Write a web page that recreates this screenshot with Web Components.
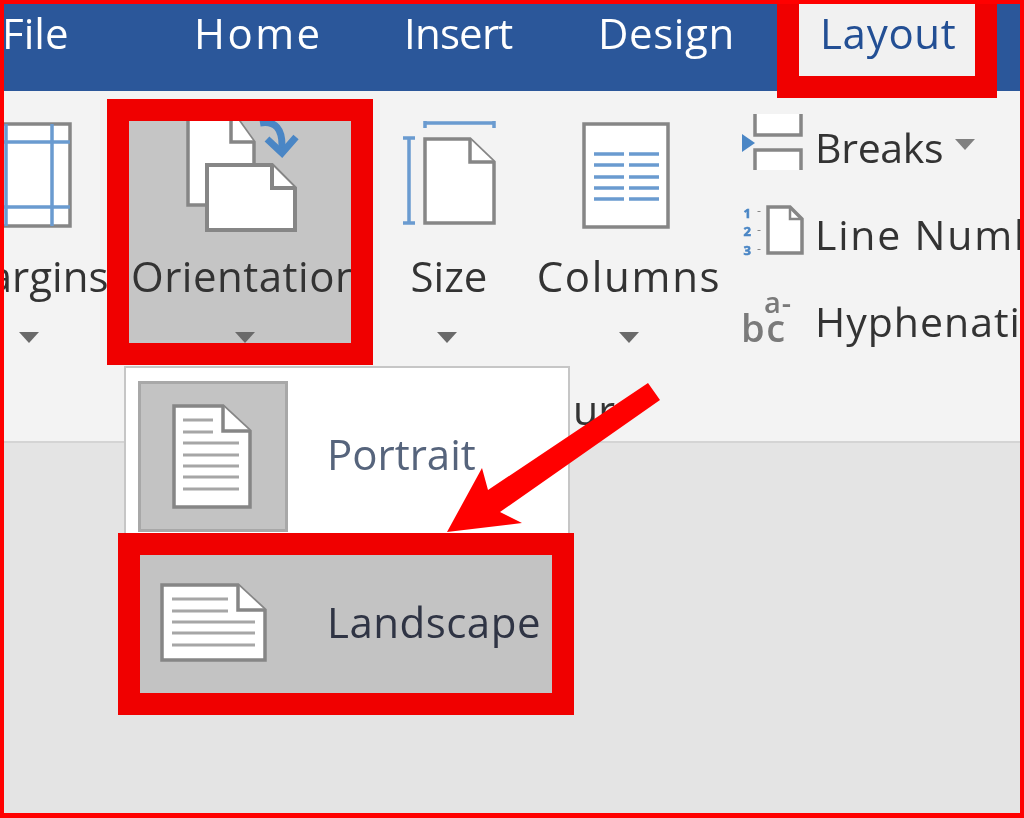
<!DOCTYPE html>
<html>
<head>
<meta charset="utf-8">
<style>
    html, body { margin: 0; padding: 0; }
    body { width: 1024px; height: 818px; overflow: hidden; font-family: "Open Sans", "Noto Sans", sans-serif; }
</style>
</head>
<body>
<word-frame>
    <tab-bar>
        <ribbon-tab style="--w:190px;margin-left:-2px;margin-right:2px">File</ribbon-tab>
        <ribbon-tab style="--w:210px;--ls:2.5px">Home</ribbon-tab>
        <ribbon-tab style="--w:194px;--ls:-.8px">Insert</ribbon-tab>
        <ribbon-tab style="--w:179px;--ls:.6px">Design</ribbon-tab>
        <ribbon-tab selected style="--w:220px;--ls:.7px">Layout</ribbon-tab>
    </tab-bar>
    <ribbon-panel>
        <ribbon-tool label="Margins" style="--w:156px;margin-left:-53px">
            <svg slot="icon" width="156" height="125" viewBox="-49 121 156 125">
                <rect x="-30" y="124" width="100" height="102" fill="#fff" stroke="#868686" stroke-width="3.5"/>
                <path d="M-30 142H70M-30 207H70M6 124V226M52 124V226" stroke="#6a9bd0" stroke-width="3.5" fill="none"/>
            </svg>
        </ribbon-tool>
        <ribbon-tool selected label="Orientation" style="--w:266px;--pad:2px;--ls:.5px;--cs:5px">
            <svg slot="icon" width="222" height="125" viewBox="129 121 222 125">
                <path d="M188 110H231L254 142V205H188Z" fill="#fff" stroke="#868686" stroke-width="3.5"/>
                <path d="M231 110V142H254" fill="#fff" stroke="#868686" stroke-width="3.5"/>
                <path d="M207 165H272L295 188V230H207Z" fill="#fff" stroke="#868686" stroke-width="4"/>
                <path d="M272 165V188H295" fill="#fff" stroke="#868686" stroke-width="4"/>
                <path d="M260 123Q283 119 282 148" fill="none" stroke="#4a86c5" stroke-width="7"/>
                <path d="M267 139L282 153L296 137" fill="none" stroke="#4a86c5" stroke-width="7"/>
            </svg>
        </ribbon-tool>
        <ribbon-tool label="Size" style="--w:148px;--pad:4px">
            <svg slot="icon" width="148" height="125" viewBox="373 121 148 125" style="overflow:visible">
                <path d="M425 123H494M425 119V128M494 119V128" fill="none" stroke="#6a9bd0" stroke-width="3.5"/>
                <path d="M409 138V223M403 138H415M403 223H415" fill="none" stroke="#6a9bd0" stroke-width="3.5"/>
                <path d="M425 139H470L494 162V223H425Z" fill="#fff" stroke="#868686" stroke-width="3.5"/>
                <path d="M470 139V162H494" fill="#fff" stroke="#868686" stroke-width="3.5"/>
            </svg>
        </ribbon-tool>
        <ribbon-tool label="Columns" style="--w:216px;--ls:1.7px">
            <svg slot="icon" width="216" height="125" viewBox="521 121 216 125">
                <rect x="584" y="124" width="84" height="103" fill="#fff" stroke="#868686" stroke-width="3.5"/>
                <path d="M594 154H624M629 154H659M594 165H624M629 165H659M594 177H624M629 177H659M594 188H624M629 188H659M594 199H624M629 199H659" stroke="#6a9bd0" stroke-width="3.5" fill="none"/>
            </svg>
        </ribbon-tool>
        <command-stack>
            <side-command label="Breaks" caret style="--ls:-.3px">
                <svg slot="icon" width="70" height="87" viewBox="742 104 70 87">
                    <path d="M755 114H801V135H755Z" fill="#fff"/>
                    <path d="M755 150H801V170H755Z" fill="#fff"/>
                    <path d="M755 114V135H801V114M755 170V150H801V170" fill="none" stroke="#868686" stroke-width="3.5"/>
                    <path d="M742 134L755 143L742 152Z" fill="#4a86c5"/>
                </svg>
            </side-command>
            <side-command label="Line Numbers" style="--ls:1.8px">
                <svg slot="icon" width="70" height="87" viewBox="742 191 70 87">
                    <path d="M768 207H790L802 219V253H768Z" fill="#fff" stroke="#868686" stroke-width="3.5"/>
                    <path d="M790 207V219H802" fill="none" stroke="#868686" stroke-width="2.5"/>
                    <path d="M759 211V212M759 230V231M759 249V250" stroke="#868686" stroke-width="3" fill="none"/>
                    <text x="748" y="218" font-size="13" font-weight="700" text-anchor="middle" fill="#4a86c5" stroke="#4a86c5" stroke-width=".6" font-family="Open Sans">1</text>
                    <text x="748" y="236" font-size="13" font-weight="700" text-anchor="middle" fill="#4a86c5" stroke="#4a86c5" stroke-width=".6" font-family="Open Sans">2</text>
                    <text x="748" y="255" font-size="13" font-weight="700" text-anchor="middle" fill="#4a86c5" stroke="#4a86c5" stroke-width=".6" font-family="Open Sans">3</text>
                </svg>
            </side-command>
            <side-command label="Hyphenation" style="--ls:1px">
                <svg slot="icon" width="70" height="87" viewBox="742 278 70 87">
                    <text x="764" y="313" font-size="29" font-weight="600" fill="#7a7a7a" font-family="Open Sans">a-</text>
                    <text x="741" y="342" font-size="38" font-weight="600" fill="#7a7a7a" font-family="Open Sans" letter-spacing="1.5">bc</text>
                </svg>
            </side-command>
        </command-stack>
    </ribbon-panel>
    <group-caption>ur</group-caption>
    <doc-area></doc-area>
    <orient-menu>
        <menu-item label="Portrait" tile>
            <svg slot="icon" width="144" height="145" viewBox="141 384 144 145">
                <path d="M174 406H223L250 431V507H174Z" fill="#fff" stroke="#868686" stroke-width="3.5"/>
                <path d="M223 406V431H250" fill="#fff" stroke="#868686" stroke-width="3.5"/>
                <path d="M183 420H213M183 432H213M183 443H239M183 455H239M183 466H239M183 477H239M183 489H239" stroke="#a6a6a6" stroke-width="3" fill="none"/>
            </svg>
        </menu-item>
        <menu-item label="Landscape" selected>
            <svg slot="icon" width="150" height="138" viewBox="140 555 150 138">
                <path d="M162 585H238L265 610V660H162Z" fill="#fff" stroke="#868686" stroke-width="3.5"/>
                <path d="M238 585V610H265" fill="#fff" stroke="#868686" stroke-width="3.5"/>
                <path d="M172 599H228M172 611H228M172 622H255M172 633H255M172 645H255" stroke="#a6a6a6" stroke-width="3" fill="none"/>
            </svg>
        </menu-item>
    </orient-menu>
    <callout-arrow></callout-arrow>
</word-frame>

<script>
    // Outer picture frame with the red screenshot edge
    class WordFrame extends HTMLElement {
        constructor() {
            super();
            this.attachShadow({ mode: "open" });
            this.shadowRoot.innerHTML = `
                <style>
                    :host {
                        display: flex;
                        flex-direction: column;
                        position: relative;
                        box-sizing: border-box;
                        width: 1024px;
                        height: 818px;
                        border: solid #f00;
                        border-width: 4px 4px 5px 4px;
                        background: #e4e4e4;
                        overflow: hidden;
                    }
                </style>
                <slot></slot>`;
        }
    }

    class TabBar extends HTMLElement {
        constructor() {
            super();
            this.attachShadow({ mode: "open" });
            this.shadowRoot.innerHTML = `
                <style>
                    :host {
                        display: flex;
                        align-items: flex-start;
                        flex: none;
                        height: 87px;
                        background: #2b579a;
                        position: relative;
                        z-index: 2;
                    }
                </style>
                <slot></slot>`;
        }
    }

    class RibbonTab extends HTMLElement {
        constructor() {
            super();
            this.attachShadow({ mode: "open" });
            this.shadowRoot.innerHTML = `
                <style>
                    :host {
                        display: block;
                        box-sizing: border-box;
                        flex: none;
                        width: var(--w);
                        height: 72px;
                        color: #fff;
                        font-size: 42px;
                        line-height: 57px;
                        letter-spacing: var(--ls, 0);
                    }
                    :host([selected]) {
                        height: 94px;
                        padding-left: 21px;
                        border: solid #f00000;
                        border-width: 0 22px 22px 22px;
                        background: #f1f1f1;
                        color: #234f94;
                    }
                    span { display: block; filter: blur(.6px); white-space: nowrap; }
                </style>
                <span><slot></slot></span>`;
        }
    }

    class RibbonPanel extends HTMLElement {
        constructor() {
            super();
            this.attachShadow({ mode: "open" });
            this.shadowRoot.innerHTML = `
                <style>
                    :host {
                        display: flex;
                        flex: none;
                        height: 266px;
                        padding-top: 8px;
                        background: #f3f3f3;
                    }
                </style>
                <slot></slot>`;
        }
    }

    // Big ribbon button: icon on top, label, small caret at the bottom
    class RibbonTool extends HTMLElement {
        constructor() {
            super();
            this.attachShadow({ mode: "open" });
            this.shadowRoot.innerHTML = `
                <style>
                    :host {
                        display: block;
                        box-sizing: border-box;
                        flex: none;
                        width: var(--w);
                        height: 266px;
                        padding: 22px 0;
                        color: #333;
                    }
                    :host([selected]) {
                        padding: 0;
                        border: 22px solid #f00000;
                        background: #c5c5c5;
                    }
                    .body {
                        display: flex;
                        flex-direction: column;
                        height: 222px;
                        overflow: hidden;
                    }
                    .icon { display: block; height: 125px; flex: none; filter: blur(.6px); }
                    .label {
                        flex: none;
                        height: 60px;
                        padding-left: var(--pad, 0);
                        font-size: 42px;
                        line-height: 60px;
                        letter-spacing: var(--ls, 0);
                        text-align: center;
                        white-space: nowrap;
                        filter: blur(.6px);
                    }
                    .caret {
                        flex: none;
                        width: 0;
                        height: 0;
                        margin: 26px 0 0 calc(50% - 10px + var(--cs, 0px));
                        border: solid transparent;
                        border-width: 11px 10px 0;
                        border-top-color: #6a6a6a;
                    }
                </style>
                <div class="body">
                    <slot class="icon" name="icon"></slot>
                    <div class="label"></div>
                    <div class="caret"></div>
                </div>`;
            this.shadowRoot.querySelector('.label').textContent = this.getAttribute('label');
        }
    }

    class CommandStack extends HTMLElement {
        constructor() {
            super();
            this.attachShadow({ mode: "open" });
            this.shadowRoot.innerHTML = `
                <style>
                    :host {
                        display: flex;
                        flex-direction: column;
                        flex: none;
                        padding: 5px 0 0 5px;
                    }
                </style>
                <slot></slot>`;
        }
    }

    class SideCommand extends HTMLElement {
        constructor() {
            super();
            this.attachShadow({ mode: "open" });
            this.shadowRoot.innerHTML = `
                <style>
                    :host {
                        display: flex;
                        align-items: center;
                        height: 87px;
                        color: #333;
                        font-size: 41px;
                        letter-spacing: var(--ls, 0);
                        white-space: nowrap;
                    }
                    .icon { display: block; flex: none; width: 70px; height: 87px; filter: blur(.6px); }
                    .label { margin-left: 3px; line-height: 87px; filter: blur(.6px); }
                    .caret {
                        display: none;
                        width: 0;
                        height: 0;
                        margin: -6px 0 0 12px;
                        border: solid transparent;
                        border-width: 11px 10px 0;
                        border-top-color: #808080;
                    }
                    :host([caret]) .caret { display: block; }
                </style>
                <slot class="icon" name="icon"></slot>
                <div class="label"></div>
                <div class="caret"></div>`;
            this.shadowRoot.querySelector('.label').textContent = this.getAttribute('label');
        }
    }

    // Bottom row of the ribbon, mostly hidden by the open menu
    class GroupCaption extends HTMLElement {
        constructor() {
            super();
            this.attachShadow({ mode: "open" });
            this.shadowRoot.innerHTML = `
                <style>
                    :host {
                        display: block;
                        flex: none;
                        box-sizing: border-box;
                        height: 78px;
                        padding: 14px 0 0 569px;
                        background: #f3f3f3;
                        border-bottom: 2px solid #d4d4d4;
                        color: #333;
                        font-size: 41px;
                        line-height: 60px;
                    }
                    span { filter: blur(.6px); display: inline-block; }
                </style>
                <span><slot></slot></span>`;
        }
    }

    class DocArea extends HTMLElement {
        constructor() {
            super();
            this.attachShadow({ mode: "open" });
            this.shadowRoot.innerHTML = `
                <style>
                    :host { display: block; flex: 1; background: #e4e4e4; }
                </style>`;
        }
    }

    class OrientMenu extends HTMLElement {
        constructor() {
            super();
            this.attachShadow({ mode: "open" });
            this.shadowRoot.innerHTML = `
                <style>
                    :host {
                        display: flex;
                        flex-direction: column;
                        position: absolute;
                        left: 120px;
                        top: 362px;
                        box-sizing: border-box;
                        width: 446px;
                        padding-top: 13px;
                        background: linear-gradient(#fff 0 167px, transparent 167px);
                        border: solid #c6c6c6;
                        border-width: 2px 2px 0;
                    }
                </style>
                <slot></slot>`;
        }
    }

    class MenuItem extends HTMLElement {
        constructor() {
            super();
            this.attachShadow({ mode: "open" });
            this.shadowRoot.innerHTML = `
                <style>
                    :host {
                        display: flex;
                        align-items: center;
                        box-sizing: border-box;
                        color: #56647c;
                        font-size: 42px;
                        white-space: nowrap;
                    }
                    :host([tile]) { height: 151px; padding-left: 12px; }
                    :host([selected]) {
                        height: 182px;
                        margin: 1px -6px 0 -8px;
                        border: 22px solid #f00000;
                        background: #c3c3c3;
                        color: #2f3444;
                        letter-spacing: .5px;
                    }
                    .icon { display: block; flex: none; filter: blur(.6px); }
                    :host([tile]) .icon {
                        width: 144px;
                        height: 145px;
                        background: #c3c3c3;
                        border: 3px solid #a8a8a8;
                        margin-right: 39px;
                    }
                    :host([selected]) .icon { width: 150px; height: 138px; margin-right: 37px; }
                    .label { line-height: 60px; filter: blur(.6px); }
                    :host([tile]) .label { margin-top: -6px; }
                    :host([selected]) .label { margin-top: -4px; }
                </style>
                <slot class="icon" name="icon"></slot>
                <div class="label"></div>`;
            this.shadowRoot.querySelector('.label').textContent = this.getAttribute('label');
        }
    }

    // Red annotation arrow, lies over the menu and the ribbon
    class CalloutArrow extends HTMLElement {
        constructor() {
            super();
            this.attachShadow({ mode: "open" });
            this.shadowRoot.innerHTML = `
                <style>
                    :host { position: absolute; left: 436px; top: 375px; width: 230px; height: 160px; }
                    svg { display: block; }
                </style>
                <svg width="230" height="160" viewBox="440 379 230 160">
                    <polygon fill="#f00" points="648,383 660,400 500,512 522,523 447,532 482,468 488,490"/>
                </svg>`;
        }
    }

    customElements.define('word-frame', WordFrame);
    customElements.define('tab-bar', TabBar);
    customElements.define('ribbon-tab', RibbonTab);
    customElements.define('ribbon-panel', RibbonPanel);
    customElements.define('ribbon-tool', RibbonTool);
    customElements.define('command-stack', CommandStack);
    customElements.define('side-command', SideCommand);
    customElements.define('group-caption', GroupCaption);
    customElements.define('doc-area', DocArea);
    customElements.define('orient-menu', OrientMenu);
    customElements.define('menu-item', MenuItem);
    customElements.define('callout-arrow', CalloutArrow);
</script>
</body>
</html>
